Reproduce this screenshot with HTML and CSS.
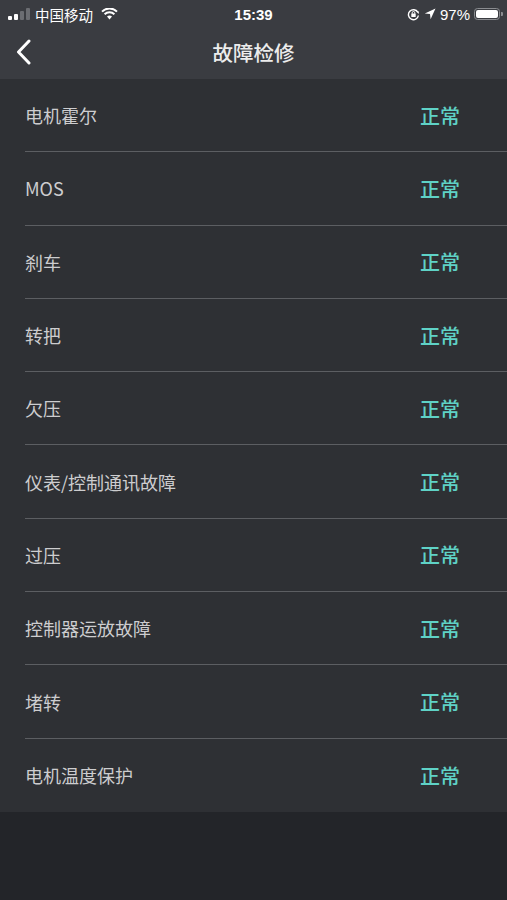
FILE: index.html
```html
<!DOCTYPE html>
<html>
  <head>
    <title>故障检修</title>
    <meta name="viewport" content="width=device-width, initial-scale=1.0">
    <link rel="stylesheet" href="styles.css">
  </head>
  <body>
    <div class="top">
      <div class="status">
        <div class="status-left">
          <span class="bars"><i class="on"></i><i class="on"></i><i></i><i></i></span>
          <span>中国移动</span>
          <svg class="wifi" width="17" height="12" viewBox="0 0 17 12">
            <path d="M8.5 11.5 L6 8.6 A3.6 3.6 0 0 1 11 8.6 Z" fill="#fff"/>
            <path d="M3.6 6.3 A7 7 0 0 1 13.4 6.3" stroke="#fff" stroke-width="2" fill="none"/>
            <path d="M1 3.6 A10.6 10.6 0 0 1 16 3.6" stroke="#fff" stroke-width="2" fill="none"/>
          </svg>
        </div>
        <div class="status-time">15:39</div>
        <div class="status-right">
          <svg width="13" height="13" viewBox="0 0 13 13">
            <path d="M10.8 4.2 A5 5 0 1 0 11.4 7.5" stroke="#fff" stroke-width="1.4" fill="none"/>
            <path d="M9.4 3.4 L12 3.4 L11.6 6 Z" fill="#fff"/>
            <rect x="4.3" y="5.6" width="4.4" height="3.4" rx="0.5" fill="#fff"/>
            <path d="M5.2 5.8 V4.8 A1.3 1.3 0 0 1 7.8 4.8 V5.8" stroke="#fff" stroke-width="1" fill="none"/>
          </svg>
          <svg width="12" height="12" viewBox="0 0 12 12">
            <path d="M11.5 0.5 L0.8 5.4 L6 6 L6.6 11.2 Z" fill="#fff"/>
          </svg>
          <span>97%</span>
          <span class="battery"><i></i></span>
        </div>
      </div>
      <header class="nav">
        <svg class="back" width="18" height="26" viewBox="0 0 18 26">
          <path d="M14 2 L3.5 13 L14 24" stroke="#fff" stroke-width="3" fill="none" stroke-linecap="round" stroke-linejoin="round"/>
        </svg>
        <h1>故障检修</h1>
      </header>
    </div>
    <ul class="list">
      <li><span>电机霍尔</span><b>正常</b></li>
      <li><span>MOS</span><b>正常</b></li>
      <li><span>刹车</span><b>正常</b></li>
      <li><span>转把</span><b>正常</b></li>
      <li><span>欠压</span><b>正常</b></li>
      <li><span>仪表/控制通讯故障</span><b>正常</b></li>
      <li><span>过压</span><b>正常</b></li>
      <li><span>控制器运放故障</span><b>正常</b></li>
      <li><span>堵转</span><b>正常</b></li>
      <li><span>电机温度保护</span><b>正常</b></li>
    </ul>
  </body>
</html>
```

FILE: styles.css
```css
* {
  margin: 0;
  padding: 0;
  box-sizing: border-box;
  font-family: "Noto Sans CJK SC", "Liberation Sans", sans-serif;
}
html,
body {
  width: 100%;
  height: 100%;
}
body {
  background-color: #232529;
  color: #fff;
}
.top {
  background-color: #3a3c41;
}
.status {
  display: flex;
  align-items: center;
  justify-content: space-between;
  height: 28px;
  padding: 0 7px 0 8px;
  font-size: 14.5px;
  position: relative;
}
.status-left,
.status-right {
  display: flex;
  align-items: center;
  gap: 5px;
}
.status-right {
  gap: 4px;
}
.status-right span {
  font-family: "Liberation Sans", sans-serif;
  font-size: 15px;
}
.status-time {
  position: absolute;
  left: 0;
  right: 0;
  text-align: center;
  font-family: "Liberation Sans", sans-serif;
  font-weight: bold;
  font-size: 15px;
  pointer-events: none;
}
.bars {
  display: flex;
  align-items: flex-end;
  gap: 2px;
  height: 12px;
}
.bars i {
  display: block;
  width: 4px;
  background-color: #6b6d72;
  border-radius: 1px;
}
.bars i:nth-child(1) { height: 4px; }
.bars i:nth-child(2) { height: 6.5px; }
.bars i:nth-child(3) { height: 9px; }
.bars i:nth-child(4) { height: 12px; }
.bars i.on {
  background-color: #fff;
}
.wifi {
  margin-left: 3px;
}
.battery {
  display: flex;
  align-items: center;
  width: 26px;
  height: 12px;
  border: 1px solid #8a8c90;
  border-radius: 3.5px;
  padding: 1px;
  position: relative;
}
.battery i {
  display: block;
  width: 100%;
  height: 100%;
  background-color: #fff;
  border-radius: 2px;
}
.battery::after {
  content: "";
  position: absolute;
  right: -4px;
  top: 3px;
  width: 2px;
  height: 4px;
  background-color: #8a8c90;
  border-radius: 0 1px 1px 0;
}
.nav {
  display: flex;
  align-items: center;
  justify-content: center;
  height: 51px;
  padding-bottom: 4px;
  position: relative;
}
.back {
  position: absolute;
  left: 15px;
  top: 11px;
}
.nav h1 {
  font-size: 20.5px;
  font-weight: 500;
  color: #ececec;
}
.list {
  list-style: none;
  background-color: #2e3034;
}
.list li {
  display: flex;
  align-items: center;
  justify-content: space-between;
  height: 73.3px;
  margin-left: 25px;
  padding-right: 47px;
  border-bottom: 1px solid #5c5e62;
}
.list li:last-child {
  border-bottom: none;
}
.list span {
  font-size: 18px;
  color: #cdcdcf;
}
.list b {
  font-size: 20px;
  font-weight: 500;
  color: #5fd2c6;
}
```
